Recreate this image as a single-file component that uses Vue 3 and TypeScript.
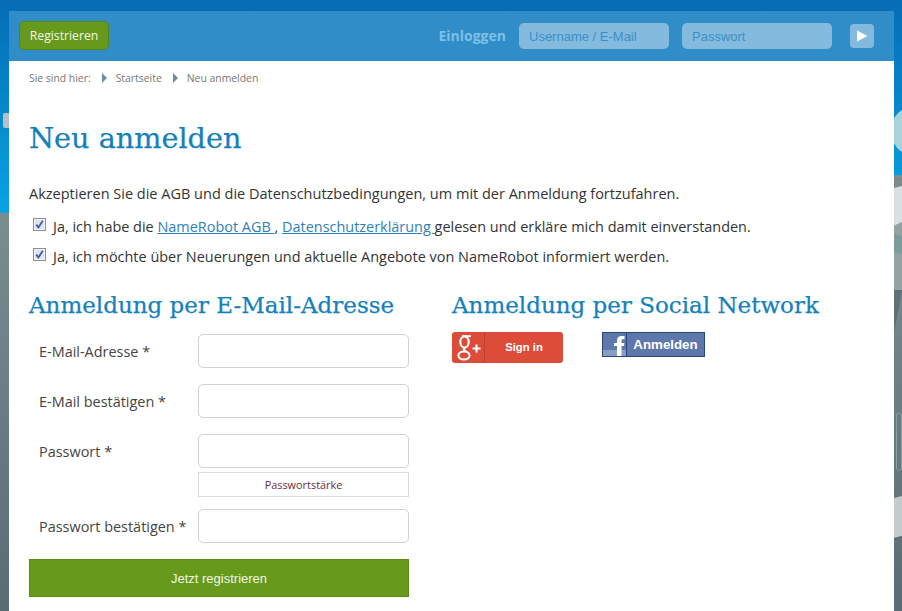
<script setup lang="ts">
interface FormField {
  label: string
  type: string
  strength?: boolean
}

const fields: FormField[] = [
  { label: 'E-Mail-Adresse *', type: 'email' },
  { label: 'E-Mail bestätigen *', type: 'email' },
  { label: 'Passwort *', type: 'password', strength: true },
  { label: 'Passwort bestätigen *', type: 'password' }
]
</script>

<template>
  <div class="page">
    <svg class="backdrop" width="902" height="611" viewBox="0 0 902 611">
      <defs>
        <linearGradient id="sky" x1="0" y1="0" x2="0" y2="1">
          <stop offset="0" stop-color="#056cb5" />
          <stop offset="1" stop-color="#08a4e2" />
        </linearGradient>
        <linearGradient id="ground" x1="0" y1="0" x2="0" y2="1">
          <stop offset="0" stop-color="#7d9094" />
          <stop offset="1" stop-color="#5a6c73" />
        </linearGradient>
      </defs>
      <rect width="902" height="215" fill="url(#sky)" />
      <polygon points="0,213 902,175 902,611 0,611" fill="url(#ground)" />
      <rect x="3" y="113" width="7" height="15" rx="2" fill="#b4c2c8" />
      <ellipse cx="912" cy="131" rx="21" ry="24" fill="#a9d3d8" />
      <polygon points="894,177 902,177 902,187 894,187" fill="#7d8a8c" />
      <polygon points="894,188 902,186 902,222 894,226" fill="#d9e0e3" />
      <polygon points="894,226 902,222 902,290 894,290" fill="#95a2a3" />
      <polygon points="894,234 902,236 902,254 894,252" fill="#7c9c9b" />
      <polygon points="894,333 902,290 894,290" fill="#5f7177" />
      <rect x="896.5" y="413" width="5" height="57" rx="2" fill="none" stroke="#8aa0a4" />
      <polygon points="894,498 902,496 902,536 894,538" fill="#c4cbcc" />
      <polygon points="894,538 902,536 902,539 894,541" fill="#5c6e75" />
    </svg>

    <div class="wrapper">
      <header class="topbar">
        <a class="register-btn">Registrieren</a>
        <div class="login">
          <span class="login-title">Einloggen</span>
          <input class="login-input" type="text" placeholder="Username / E-Mail" />
          <input class="login-input" type="password" placeholder="Passwort" />
          <button class="login-go" type="button" aria-label="Einloggen">
            <svg width="12" height="12" viewBox="0 0 12 12"><path d="M1 0.5 L11.5 6 L1 11.5 Z" fill="#fff" /></svg>
          </button>
        </div>
      </header>

      <main class="content">
        <nav class="crumbs">
          <span>Sie sind hier:</span>
          <i class="crumb-arrow"></i>
          <span>Startseite</span>
          <i class="crumb-arrow"></i>
          <span>Neu anmelden</span>
        </nav>

        <h1>Neu anmelden</h1>
        <p class="intro">Akzeptieren Sie die AGB und die Datenschutzbedingungen, um mit der Anmeldung fortzufahren.</p>

        <label class="consent">
          <span class="check">
            <svg width="9" height="9" viewBox="0 0 9 9"><path d="M1.2 4.6 L3.4 7.4 L7.8 0.8" fill="none" stroke="#3f5ea8" stroke-width="1.8" /></svg>
          </span>
          <span>Ja, ich habe die <a>NameRobot AGB </a>, <a>Datenschutzerklärung </a>gelesen und erkläre mich damit einverstanden.</span>
        </label>
        <label class="consent">
          <span class="check">
            <svg width="9" height="9" viewBox="0 0 9 9"><path d="M1.2 4.6 L3.4 7.4 L7.8 0.8" fill="none" stroke="#3f5ea8" stroke-width="1.8" /></svg>
          </span>
          <span>Ja, ich möchte über Neuerungen und aktuelle Angebote von NameRobot informiert werden.</span>
        </label>

        <div class="columns">
          <section class="col-mail">
            <h2>Anmeldung per E-Mail-Adresse</h2>
            <div class="form-rows">
              <div v-for="field in fields" :key="field.label" class="form-row">
                <label class="form-label">{{ field.label }}</label>
                <div class="form-control">
                  <input class="form-input" :type="field.type" />
                  <div v-if="field.strength" class="strength">Passwortstärke</div>
                </div>
              </div>
            </div>
            <button class="submit" type="button">Jetzt registrieren</button>
          </section>

          <section class="col-social">
            <h2>Anmeldung per Social Network</h2>
            <div class="social">
              <a class="google">
                <span class="google-icon">
                  <svg width="32" height="31" viewBox="0 0 32 31" fill="none" stroke="#fff">
                    <ellipse cx="12.5" cy="10" rx="4.2" ry="5.6" stroke-width="2.2" />
                    <path d="M19 4.2 H10" stroke-width="2" />
                    <path d="M13.5 15.5 C10.5 17 11.5 18 14 19.5" stroke-width="2" />
                    <ellipse cx="12" cy="23.5" rx="5.6" ry="4" stroke-width="2" />
                    <path d="M20.5 16.5 H28.5 M24.5 12.5 V20.5" stroke-width="2.2" />
                  </svg>
                </span>
                <span class="google-text">Sign in</span>
              </a>
              <a class="facebook">
                <span class="fb-icon">
                  <svg width="23" height="23" viewBox="0 0 23 23">
                    <path d="M18.5 23 V13 H21 L21.4 10 H18.5 V8 C18.5 6.8 19 6.3 20.2 6.3 H21.5 V3 H19 C15.5 3 14 4.6 14 7.6 V10 H11 V13 H14 V23 Z" fill="#fff" />
                  </svg>
                </span>
                <span class="fb-text">Anmelden</span>
              </a>
            </div>
          </section>
        </div>
      </main>
    </div>
  </div>
</template>

<style scoped>
.page {
  position: relative;
  width: 902px;
  height: 611px;
  overflow: hidden;
  padding: 11px 8px 0 9px;
  box-sizing: border-box;
  font-family: "Open Sans", "Liberation Sans", sans-serif;
}

.backdrop {
  position: absolute;
  left: 0;
  top: 0;
}

.wrapper {
  position: relative;
  width: 885px;
  height: 600px;
  background: #fff;
}

.topbar {
  display: flex;
  align-items: center;
  justify-content: space-between;
  height: 50px;
  background: #308dc7;
  padding: 0 20px 0 10px;
  box-sizing: border-box;
}

.register-btn {
  box-sizing: border-box;
  width: 90px;
  height: 29px;
  margin-top: -1px;
  line-height: 27px;
  text-align: center;
  font-size: 12.2px;
  color: #f2f8e6;
  background: #66991c;
  border: 1px solid #56841a;
  border-radius: 5px;
}

.login {
  display: flex;
  align-items: center;
}

.login-title {
  font-size: 14px;
  font-weight: 700;
  color: #7cc0e6;
  margin-right: 13px;
  margin-top: -2px;
}

.login-input {
  box-sizing: border-box;
  width: 150px;
  height: 26px;
  margin-right: 13px;
  padding: 0 10px;
  border: 0;
  border-radius: 5px;
  background: #83badd;
  font-family: "Liberation Sans", sans-serif;
  font-size: 13px;
  color: #308dc7;
}

.login-input::placeholder {
  color: #3d8fca;
  opacity: 1;
}

.login-go {
  display: flex;
  align-items: center;
  justify-content: center;
  width: 24px;
  height: 24px;
  margin-left: 5px;
  padding: 0;
  border: 0;
  border-radius: 4px;
  background: #83badd;
}

.content {
  padding: 0 20px;
}

.crumbs {
  display: flex;
  align-items: center;
  height: 34px;
  font-size: 10.4px;
  color: #777;
}

.crumb-arrow {
  width: 0;
  height: 0;
  margin: 0 9px 0 11px;
  border-left: 5px solid #6f8ba0;
  border-top: 5px solid transparent;
  border-bottom: 5px solid transparent;
}

h1,
h2 {
  margin: 0;
  font-family: "DejaVu Serif", "Liberation Serif", serif;
  font-weight: 400;
  color: #1581bb;
  -webkit-text-stroke: 0.25px #1581bb;
}

h1 {
  margin-top: 23px;
  font-size: 28.7px;
  line-height: 40px;
}

.intro {
  margin: 26px 0 0;
  font-size: 14.5px;
  line-height: 20px;
  color: #333;
}

.consent {
  display: flex;
  align-items: center;
  height: 20px;
  margin-top: 10px;
  padding-left: 4px;
  font-size: 14.45px;
  color: #333;
}

.intro + .consent {
  margin-top: 12px;
}

.consent a {
  color: #2f7fb8;
  text-decoration: underline;
}

.check {
  display: flex;
  align-items: center;
  justify-content: center;
  box-sizing: border-box;
  width: 13px;
  height: 13px;
  margin-top: -4px;
  margin-right: 7px;
  border: 1px solid #8e8f8f;
  background: #dfe4f0;
  box-shadow: inset 0 0 0 1px #f4f4f4;
}

.columns {
  display: flex;
  margin-top: 23px;
}

.col-mail {
  width: 380px;
  margin-right: 43px;
}

h2 {
  font-size: 23px;
  line-height: 32px;
}

.form-rows {
  margin-top: 13px;
}

.form-row {
  display: flex;
  margin-bottom: 16px;
}

.form-label {
  width: 169px;
  height: 34px;
  padding: 1px 0 0 10px;
  box-sizing: border-box;
  font-size: 14.45px;
  line-height: 34px;
  color: #444;
}

.form-control {
  width: 211px;
}

.form-input {
  display: block;
  box-sizing: border-box;
  width: 211px;
  height: 34px;
  border: 1px solid #d2d2d2;
  border-radius: 5px;
  background: #fff;
}

.strength {
  box-sizing: border-box;
  height: 25px;
  margin-top: 4px;
  margin-bottom: -4px;
  line-height: 23px;
  border: 1px solid #dcdcdc;
  text-align: center;
  font-size: 10.9px;
  color: #6b2b3f;
}

.submit {
  display: block;
  width: 380px;
  height: 38px;
  padding: 0;
  border: 1px solid #5a8a14;
  background: #66991c;
  color: #f0f6e2;
  font-family: "Liberation Sans", sans-serif;
  font-size: 13px;
}

.social {
  display: flex;
  align-items: flex-start;
  margin-top: 11px;
}

.google {
  display: flex;
  width: 111px;
  height: 31px;
  margin-right: 39px;
  border-radius: 3px;
  background: #dd4b39;
  color: #fff;
  font-family: "Liberation Sans", sans-serif;
}

.google-icon {
  display: flex;
  width: 32px;
  border-right: 1px solid #bc3f30;
}

.google-text {
  flex: 1;
  text-align: center;
  font-size: 11.3px;
  font-weight: 700;
  line-height: 31px;
}

.facebook {
  display: flex;
  box-sizing: border-box;
  width: 103px;
  height: 25px;
  border: 1px solid #29447e;
  background: #5f78ab;
  color: #fff;
  font-family: "Liberation Sans", sans-serif;
}

.fb-icon {
  display: flex;
  box-sizing: border-box;
  width: 24px;
  border-right: 1px solid #29447e;
  background: linear-gradient(#5f78ab 0 17px, #8a9cc2 17px);
}

.fb-text {
  flex: 1;
  text-align: center;
  font-size: 13.3px;
  font-weight: 700;
  line-height: 23px;
}
</style>

<style>
html,
body {
  margin: 0;
  background: #5a6c73;
}
</style>
